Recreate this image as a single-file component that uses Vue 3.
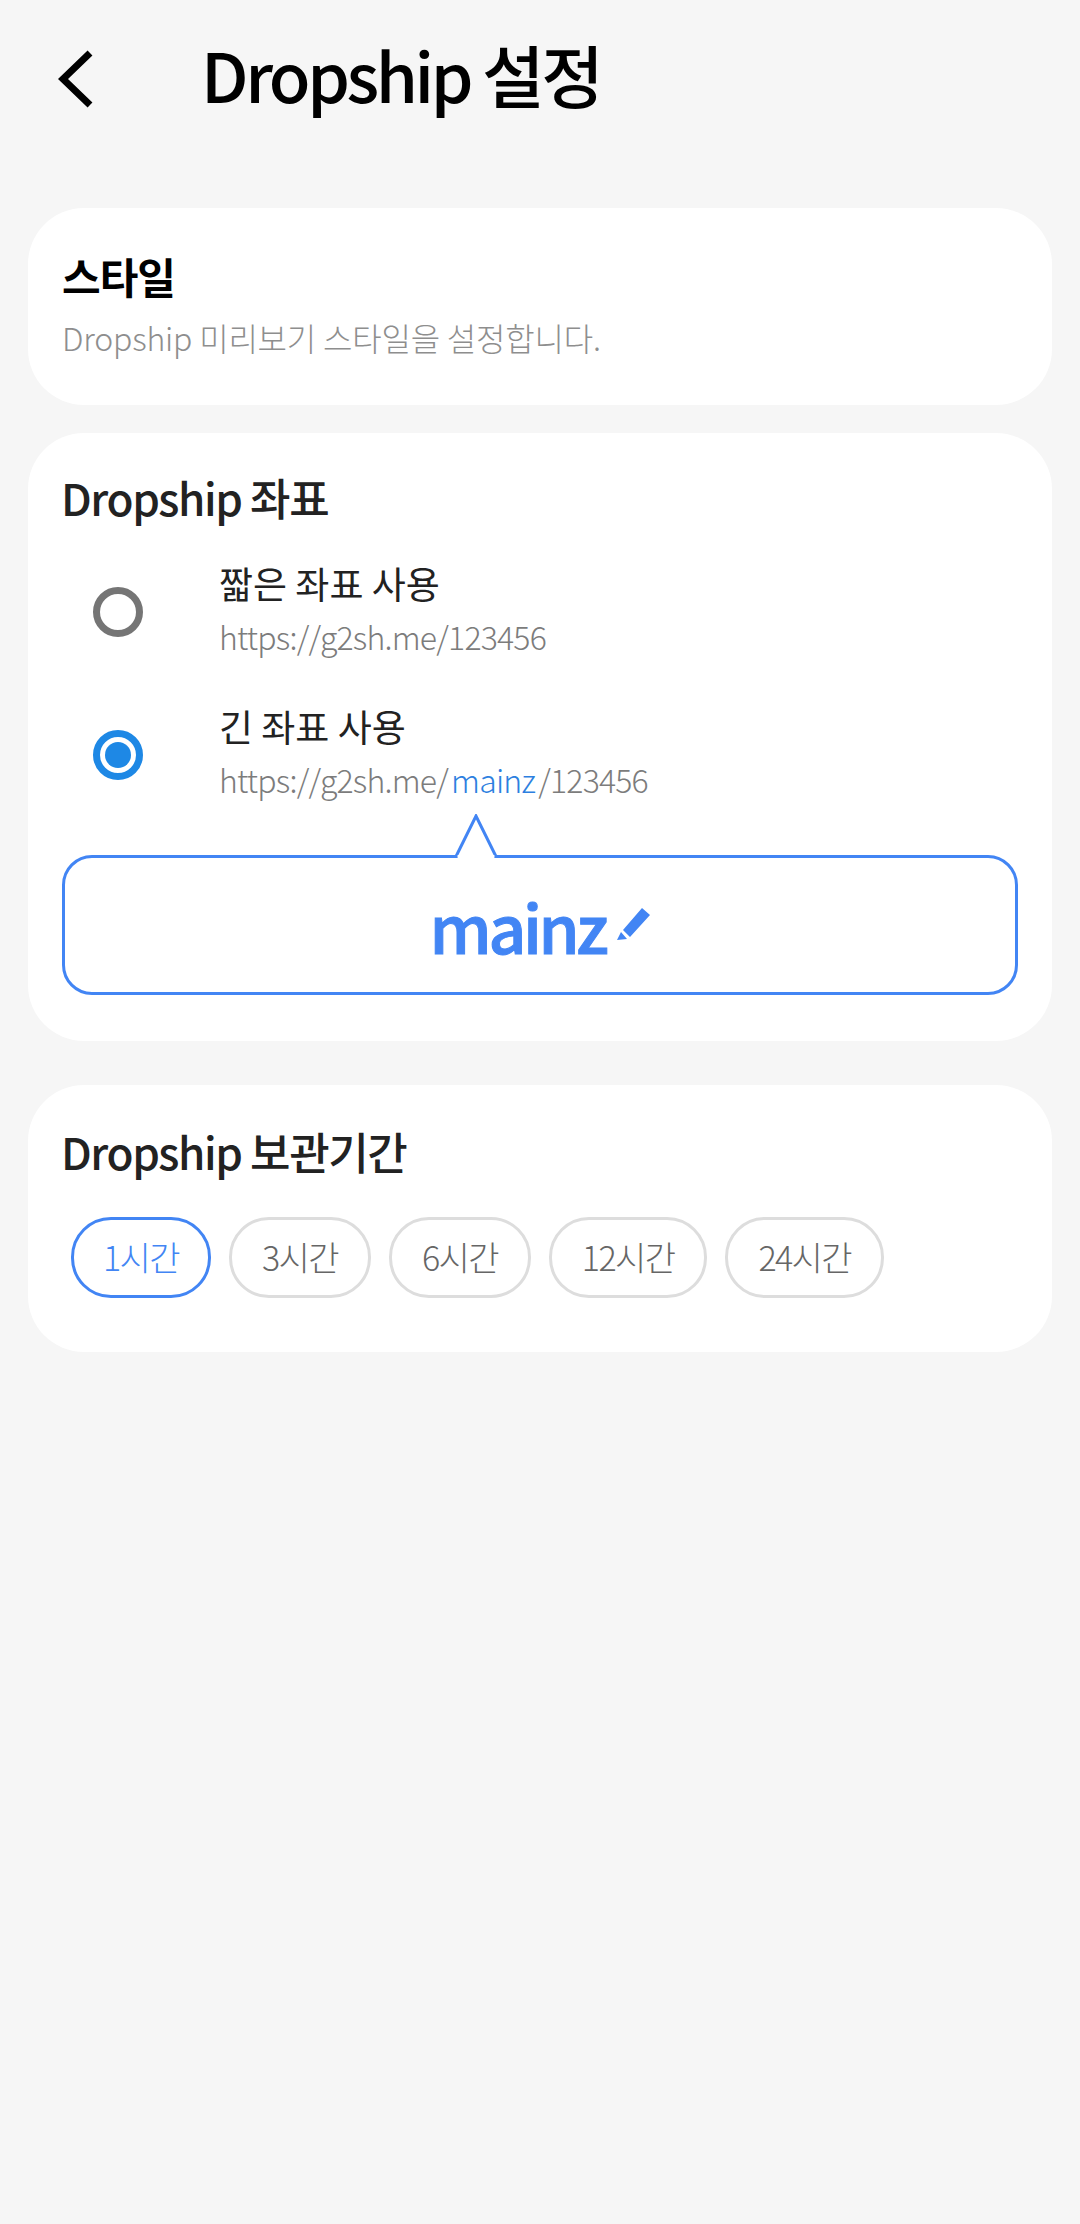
<template>
  <div class="page">
    <header class="top">
      <button class="back" aria-label="back">
        <svg width="36" height="58" viewBox="0 0 36 58"><path d="M32 3 L5 29 L32 55" fill="none" stroke="#000" stroke-width="7" /></svg>
      </button>
      <h1>Dropship 설정</h1>
    </header>

    <section class="card style-card">
      <h2 class="black">스타일</h2>
      <p class="desc">Dropship 미리보기 스타일을 설정합니다.</p>
    </section>

    <section class="card url-card">
      <h2>Dropship 좌표</h2>
      <div class="options">
        <div v-for="o in options" :key="o.id" class="option">
          <span class="radio" :class="{ on: o.id === selected }"></span>
          <div class="option-text">
            <div class="label">{{ o.label }}</div>
            <div class="url">https://g2sh.me/<template v-if="o.long"><span class="sub">mainz</span>/</template>123456</div>
          </div>
        </div>
      </div>
      <div class="bubble">
        <svg class="tail" width="46" height="46" viewBox="0 0 46 46">
          <path d="M0 42.5 H3 L23 2 L43 42.5 H46" fill="#fff" stroke="#4285f4" stroke-width="3" />
          <path d="M4.6 41 H41.4 V46 H4.6 Z" fill="#fff" />
        </svg>
        <span class="sub-name">mainz</span>
        <svg class="pencil" width="33" height="32" viewBox="0 0 33 32"><path d="M25 0 L33 7 L13 29 L6 22 Z M4 24 L10 31 L0 32 Z" fill="#4285f4" /></svg>
      </div>
    </section>

    <section class="card keep-card">
      <h2>Dropship 보관기간</h2>
      <div class="chips">
        <span v-for="h in hours" :key="h" class="chip" :class="{ on: h === 1 }">{{ h }}시간</span>
      </div>
    </section>
  </div>
</template>

<script setup>
const selected = 'long'
const options = [
  { id: 'short', label: '짧은 좌표 사용', long: false },
  { id: 'long', label: '긴 좌표 사용', long: true },
]
const hours = [1, 3, 6, 12, 24]
</script>

<style>
html, body { margin: 0; background: #f6f6f6; }
</style>

<style scoped>
.page {
  min-height: 2224px;
  background: #f6f6f6;
  font-family: "Noto Sans CJK KR", "Noto Sans", sans-serif;
  padding: 0 28px;
  box-sizing: border-box;
  overflow: hidden;
}
.top {
  height: 208px;
  display: flex;
  align-items: flex-start;
  margin-left: -28px;
}
.back {
  border: none;
  background: none;
  padding: 0;
  margin: 50px 0 0 58px;
  width: 143px;
  height: 58px;
  text-align: left;
}
h1 {
  margin: 28px 0 0;
  font-size: 68px;
  line-height: 92px;
  font-weight: 500;
  color: #000;
  letter-spacing: -3.4px;
}
.card {
  background: #fff;
  border-radius: 56px;
  box-sizing: border-box;
  padding: 0 34px;
}
.style-card { height: 197px; padding-top: 38px; }
.url-card { height: 608px; margin-top: 28px; padding-top: 34px; }
.keep-card { height: 267px; margin-top: 44px; padding-top: 36px; }
h2 {
  margin: 0 0 0 -1px;
  font-size: 44px;
  line-height: 60px;
  font-weight: 500;
  color: #222;
  letter-spacing: -1.4px;
}
h2.black { color: #000; font-weight: 700; font-size: 42px; letter-spacing: -1px; margin-left: 0; }
.desc {
  margin: 9px 0 0;
  font-size: 32px;
  line-height: 44px;
  font-weight: 300;
  color: #8e8e8e;
  letter-spacing: -0.2px;
}
.options { margin-top: 13px; }
.option {
  display: flex;
  align-items: center;
  height: 143px;
}
.radio {
  width: 50px;
  height: 50px;
  box-sizing: border-box;
  border: 7px solid #757575;
  border-radius: 50%;
  margin-left: 31px;
  flex-shrink: 0;
  position: relative;
}
.radio.on { border-color: #1e88e5; }
.radio.on::after {
  content: "";
  position: absolute;
  inset: 5px;
  border-radius: 50%;
  background: #1e88e5;
}
.option-text { margin-left: 76px; margin-top: -8px; }
.label {
  font-size: 37px;
  line-height: 50px;
  font-weight: 400;
  color: #222;
}
.url {
  margin-top: 6px;
  font-size: 32px;
  line-height: 44px;
  font-weight: 300;
  color: #7c7c7c;
  letter-spacing: -0.8px;
}
.sub { color: #2d7fe0; margin: 0 3px; }
.bubble {
  position: relative;
  margin-top: 29px;
  height: 140px;
  box-sizing: border-box;
  border: 3px solid #4285f4;
  border-radius: 30px;
  display: flex;
  align-items: center;
  justify-content: center;
}
.tail { position: absolute; left: 388px; top: -44px; }
.sub-name {
  font-size: 66px;
  line-height: 90px;
  font-weight: 500;
  color: #4285f4;
  letter-spacing: -3.4px;
  -webkit-text-stroke: 1px #4285f4;
}
.pencil { margin: -2px 0 0 12px; }
.chips {
  display: flex;
  gap: 18px;
  margin-top: 36px;
  padding-left: 9px;
}
.chip {
  height: 81px;
  box-sizing: border-box;
  padding: 0 30px 2px;
  border: 3px solid #ddd;
  border-radius: 40px;
  display: flex;
  align-items: center;
  font-size: 34px;
  font-weight: 300;
  color: #666;
  letter-spacing: -1.6px;
}
.chip.on { border-color: #4285f4; color: #4285f4; padding: 0 29px 2px; }
</style>
